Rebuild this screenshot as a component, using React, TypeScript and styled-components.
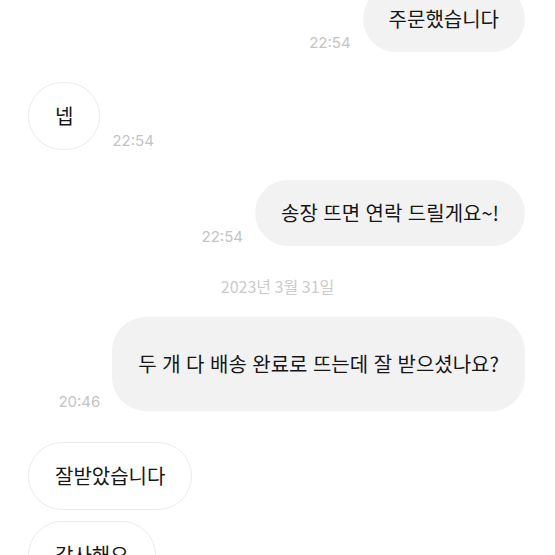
import React from "react";
import styled, { createGlobalStyle } from "styled-components";

const Global = createGlobalStyle`
  html, body { margin: 0; padding: 0; background: #ffffff; }
  body { font-family: "Noto Sans CJK KR", "Noto Sans", sans-serif; overflow: hidden; }
`;

const Chat = styled.div`
  display: flex;
  flex-direction: column;
  width: 555px;
  height: 555px;
  overflow: hidden;
`;

const Row = styled.div<{ $mine?: boolean; $top: number }>`
  display: flex;
  flex-direction: row;
  align-items: flex-end;
  justify-content: ${(p) => (p.$mine ? "flex-end" : "flex-start")};
  gap: 12px;
  margin-top: ${(p) => p.$top}px;
  padding: ${(p) => (p.$mine ? "0 30px 0 0" : "0 0 0 28px")};
  flex-shrink: 0;
`;

const Bubble = styled.div<{ $mine?: boolean; $padY?: number }>`
  box-sizing: border-box;
  padding: ${(p) => p.$padY ?? 20}px 26px;
  border-radius: 34px;
  font-size: 20px;
  line-height: 26px;
  word-spacing: 1px;
  color: #161616;
  white-space: nowrap;
  background: ${(p) => (p.$mine ? "#f2f2f3" : "#ffffff")};
  border: ${(p) => (p.$mine ? "none" : "1px solid #ebebeb")};
`;

const Time = styled.span`
  font-family: Inter, "Noto Sans", sans-serif;
  font-size: 15px;
  line-height: 16px;
  color: #c4c4c4;
  margin-bottom: 1px;
  white-space: nowrap;
`;

const DateLine = styled.div`
  display: flex;
  justify-content: center;
  margin-top: 30px;
  height: 20px;
  align-items: center;
  font-size: 16px;
  color: #cbcbcb;
  flex-shrink: 0;
`;

type Msg = { mine: boolean; text: string; time?: string; top: number; padY?: number };

const before: Msg[] = [
  { mine: true, text: "주문했습니다", time: "22:54", top: -14 },
  { mine: false, text: "넵", time: "22:54", top: 30 },
  { mine: true, text: "송장 뜨면 연락 드릴게요~!", time: "22:54", top: 30 },
];

const after: Msg[] = [
  { mine: true, text: "두 개 다 배송 완료로 뜨는데 잘 받으셨나요?", time: "20:46", top: 21, padY: 34 },
  { mine: false, text: "잘받았습니다", top: 31 },
  { mine: false, text: "감사해요", top: 11 },
];

const Message = ({ m }: { m: Msg }) => (
  <Row $mine={m.mine} $top={m.top}>
    {m.mine && m.time && <Time>{m.time}</Time>}
    <Bubble $mine={m.mine} $padY={m.padY}>{m.text}</Bubble>
    {!m.mine && m.time && <Time>{m.time}</Time>}
  </Row>
);

export default function App() {
  return (
    <>
      <Global />
      <Chat>
        {before.map((m, i) => (
          <Message key={"b" + i} m={m} />
        ))}
        <DateLine>2023년 3월 31일</DateLine>
        {after.map((m, i) => (
          <Message key={"a" + i} m={m} />
        ))}
      </Chat>
    </>
  );
}
